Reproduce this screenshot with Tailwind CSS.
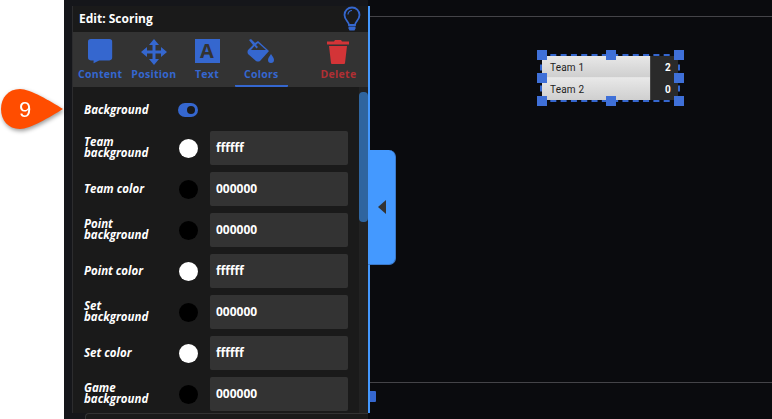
<!DOCTYPE html>
<html lang="en">
<head>
    <meta charset="UTF-8">
    <title>Edit: Scoring</title>
    <script src="https://cdn.jsdelivr.net/npm/@tailwindcss/browser@4"></script>
</head>
<body class="bg-white font-['Open_Sans',sans-serif]">
<div class="relative flex w-[772px] h-[419px] overflow-hidden bg-white">
    <div class="w-[64px] shrink-0 bg-white"></div>

    <!-- Sidebar -->
    <div class="flex flex-col w-[304px] shrink-0 bg-[#15161a]">
        <div class="flex flex-1 min-h-0 pt-[6px]">
            <div class="w-[9px] shrink-0 border-r border-[#2c2c2e]"></div>
            <div class="flex flex-col flex-1 min-w-0">
                <div class="flex items-center justify-between h-[26px] pl-[6px] pr-[6px] bg-[#1a1a1a]">
                    <span class="text-[12px] font-bold text-white">Edit: Scoring</span>
                    <svg class="w-[20px] h-[26px]" viewBox="0 0 20 26" fill="none">
                        <path d="M7 19c0-3-4.500-5-4.500-10a7.500 7.500 0 0 1 15 0c0 5-4.500 7-4.500 10z" stroke="#3567cf" stroke-width="1.800"/>
                        <path d="M6 8.500a4 4 0 0 1 4-4" stroke="#3567cf" stroke-width="1.200"/>
                        <path d="M6.500 20.500h7v2l-1 2h-5l-1-2z" fill="#3567cf"/>
                    </svg>
                </div>

                <div class="flex h-[55px] bg-[#333333] text-[10.500px] font-bold tracking-[0.3px] text-[#3567cf]">
                    <div class="flex flex-col items-center w-[55px] pt-[7px]">
                        <svg class="w-[26px] h-[26px]" viewBox="0 0 26 26"><path d="M3 0h20a3 3 0 0 1 3 3v17a3 3 0 0 1-3 3H12l-6 3v-3H3a3 3 0 0 1-3-3V3a3 3 0 0 1 3-3z" fill="#3567cf" transform="translate(1 0) scale(.93)"/></svg>
                        <span class="leading-[14px] mt-[2px]">Content</span>
                    </div>
                    <div class="flex flex-col items-center w-[54px] pt-[7px]">
                        <svg class="w-[26px] h-[26px]" viewBox="0 0 26 26" fill="#3567cf"><path d="M13 0l5 6h-3.500v5.500H20V8l6 5-6 5v-3.500h-5.500V20H18l-5 6-5-6h3.500v-5.500H6V18l-6-5 6-5v3.500h5.500V6H8z"/></svg>
                        <span class="leading-[14px] mt-[2px]">Position</span>
                    </div>
                    <div class="flex flex-col items-center w-[54px] pt-[7px]">
                        <div class="flex items-center justify-center w-[25px] h-[24px] mb-[2px] bg-[#3567cf] text-[20px] leading-none text-[#333333]">A</div>
                        <span class="leading-[14px] mt-[2px]">Text</span>
                    </div>
                    <div class="flex flex-col items-center w-[54px] ml-[1px] pt-[7px] rounded-b-[1px] border-b-[2px] border-[#3567cf]">
                        <svg class="w-[28px] h-[26px]" viewBox="0 0 28 26" fill="#3567cf"><path d="M2 1l2-1 4 4 3-2 11 10-9 10q-2 1-4 0L1 15q-1-2 0-4l5-5zM7.500 7L4 11h15l-8-7-2 2 2 2-1.500 1.500z"/><path d="M24 15c2 3 3 4 3 6a3 3 0 0 1-6 0c0-2 1-3 3-6z"/></svg>
                        <span class="leading-[14px] mt-[2px]">Colors</span>
                    </div>
                    <div class="flex flex-col items-center w-[60px] ml-[21px] pt-[7px] text-[#b02f33]">
                        <svg class="w-[22px] h-[26px]" viewBox="0 0 22 26"><path d="M0 2.500h7l1-1.500h6l1 1.500h7v3H0zM2 7h18l-2 17q0 1-1 1H5q-1 0-1-1z" fill="#d33437"/></svg>
                        <span class="leading-[14px] mt-[2px]">Delete</span>
                    </div>
                </div>

                <div class="relative flex flex-col flex-1 min-h-0 overflow-hidden bg-[#1a1a1a] pl-[11px]">
                    <div class="flex items-center h-[44px] shrink-0 pt-[2px]">
                        <span class="w-[94px] text-[11.500px] font-bold italic text-white">Background</span>
                        <span class="relative w-[20px] h-[14px] rounded-full bg-[#3567cf]">
                            <span class="absolute right-[3px] top-[3px] w-[8px] h-[8px] rounded-full bg-[#1a1a1a]"></span>
                        </span>
                    </div>
                    <div class="flex flex-col gap-[7px]">
                        <div class="flex items-center h-[34px]">
                            <span class="w-[95px] pb-[2px] text-[11.500px] leading-[11px] font-bold italic text-white">Team<br>background</span>
                            <span class="w-[19px] h-[19px] rounded-full bg-white mr-[12px]"></span>
                            <span class="flex items-center w-[138px] h-[34px] pl-[6px] rounded-[2px] bg-[#333333] text-[12px] font-bold text-white">ffffff</span>
                        </div>
                        <div class="flex items-center h-[34px]">
                            <span class="w-[95px] pb-[2px] text-[11.500px] leading-[11px] font-bold italic text-white">Team color</span>
                            <span class="w-[19px] h-[19px] rounded-full bg-black mr-[12px]"></span>
                            <span class="flex items-center w-[138px] h-[34px] pl-[6px] rounded-[2px] bg-[#333333] text-[12px] font-bold text-white">000000</span>
                        </div>
                        <div class="flex items-center h-[34px]">
                            <span class="w-[95px] pb-[2px] text-[11.500px] leading-[11px] font-bold italic text-white">Point<br>background</span>
                            <span class="w-[19px] h-[19px] rounded-full bg-black mr-[12px]"></span>
                            <span class="flex items-center w-[138px] h-[34px] pl-[6px] rounded-[2px] bg-[#333333] text-[12px] font-bold text-white">000000</span>
                        </div>
                        <div class="flex items-center h-[34px]">
                            <span class="w-[95px] pb-[2px] text-[11.500px] leading-[11px] font-bold italic text-white">Point color</span>
                            <span class="w-[19px] h-[19px] rounded-full bg-white mr-[12px]"></span>
                            <span class="flex items-center w-[138px] h-[34px] pl-[6px] rounded-[2px] bg-[#333333] text-[12px] font-bold text-white">ffffff</span>
                        </div>
                        <div class="flex items-center h-[34px]">
                            <span class="w-[95px] pb-[2px] text-[11.500px] leading-[11px] font-bold italic text-white">Set<br>background</span>
                            <span class="w-[19px] h-[19px] rounded-full bg-black mr-[12px]"></span>
                            <span class="flex items-center w-[138px] h-[34px] pl-[6px] rounded-[2px] bg-[#333333] text-[12px] font-bold text-white">000000</span>
                        </div>
                        <div class="flex items-center h-[34px]">
                            <span class="w-[95px] pb-[2px] text-[11.500px] leading-[11px] font-bold italic text-white">Set color</span>
                            <span class="w-[19px] h-[19px] rounded-full bg-white mr-[12px]"></span>
                            <span class="flex items-center w-[138px] h-[34px] pl-[6px] rounded-[2px] bg-[#333333] text-[12px] font-bold text-white">ffffff</span>
                        </div>
                        <div class="flex items-center h-[34px]">
                            <span class="w-[95px] pb-[2px] text-[11.500px] leading-[11px] font-bold italic text-white">Game<br>background</span>
                            <span class="w-[19px] h-[19px] rounded-full bg-black mr-[12px]"></span>
                            <span class="flex items-center w-[138px] h-[34px] pl-[6px] rounded-[2px] bg-[#333333] text-[12px] font-bold text-white">000000</span>
                        </div>
                    </div>
                    <!-- Scrollbar -->
                    <div class="absolute right-0 top-0 bottom-0 w-[9px] bg-[#222222]">
                        <div class="mt-[5px] h-[130px] rounded-[4px] bg-[#2f659f]"></div>
                    </div>
                </div>
            </div>
        </div>
        <div class="h-[6px] shrink-0 pl-[21px] bg-[#15161a]">
            <div class="h-full rounded-tl-[4px] border-t border-l border-[#333333] bg-[#1a1a1a]"></div>
        </div>
    </div>

    <!-- Canvas -->
    <div class="relative flex-1 bg-[#0a0b0e]">
        <div class="absolute left-0 top-[6px] bottom-[6px] w-[2px] bg-[#4499ff]"></div>
        <div class="absolute left-[2px] right-0 top-[16px] h-px bg-[#444448]"></div>
        <div class="absolute left-[2px] right-0 top-[382px] h-px bg-[#444448]"></div>
        <div class="absolute left-[2px] top-[391px] w-[6px] h-[11px] rounded-r-[1px] bg-[#3567cf]"></div>

        <!-- Panel toggle -->
        <div class="absolute left-0 top-[150px] flex items-center justify-center w-[28px] h-[115px] rounded-r-[7px] bg-[#4499ff] border-r border-b border-[#3a78c8]">
            <span class="w-0 h-0 border-y-[7px] border-y-transparent border-r-[8px] border-r-[#333333]"></span>
        </div>

        <!-- Scoreboard -->
        <div class="absolute left-[172px] top-[54px] w-[140px] h-[48px] border-2 border-dashed border-[#3567cf]">
            <div class="flex h-[22px] text-[10px] tracking-[0.2px] font-['Roboto',sans-serif]">
                <div class="flex items-center flex-1 pl-[8px] pt-[1px] border-b border-[#e4e4e4] bg-gradient-to-b from-[#e8e8e8] to-[#cfcfcf] text-[#222]">Team 1</div>
                <div class="flex items-center justify-end w-[28px] pr-[7px] pt-[1px] border-l border-[#444] bg-[#2a2a2a] text-white font-bold">2</div>
            </div>
            <div class="flex h-[22px] text-[10px] tracking-[0.2px] font-['Roboto',sans-serif]">
                <div class="flex items-center flex-1 pl-[8px] pt-[1px] bg-gradient-to-b from-[#e8e8e8] to-[#cfcfcf] text-[#222]">Team 2</div>
                <div class="flex items-center justify-end w-[28px] pr-[7px] pt-[1px] border-l border-[#444] bg-[#2a2a2a] text-white font-bold">0</div>
            </div>
            <span class="absolute left-[-5px] top-[-6px] w-[10px] h-[10px] bg-[#3f70d8]"></span>
            <span class="absolute left-[64px] top-[-6px] w-[10px] h-[10px] bg-[#3f70d8]"></span>
            <span class="absolute right-[-6px] top-[-6px] w-[10px] h-[10px] bg-[#3f70d8]"></span>
            <span class="absolute left-[-5px] top-[17px] w-[10px] h-[10px] bg-[#3f70d8]"></span>
            <span class="absolute right-[-6px] top-[17px] w-[10px] h-[10px] bg-[#3f70d8]"></span>
            <span class="absolute left-[-5px] bottom-[-6px] w-[10px] h-[10px] bg-[#3f70d8]"></span>
            <span class="absolute left-[64px] bottom-[-6px] w-[10px] h-[10px] bg-[#3f70d8]"></span>
            <span class="absolute right-[-6px] bottom-[-6px] w-[10px] h-[10px] bg-[#3f70d8]"></span>
        </div>
    </div>

    <!-- Step callout -->
    <div class="absolute left-0 top-[89px] flex items-center w-[64px] h-[40px] drop-shadow-[1px_2px_2px_rgba(0,0,0,0.4)]">
        <svg class="absolute inset-0" width="64" height="40" viewBox="0 0 64 40"><path d="M20 0C30 0 50 12 63 20 50 28 30 40 20 40 8 40 1 31 1 20S8 0 20 0z" fill="#ff4d00"/></svg>
        <span class="relative ml-[19px] font-['Liberation_Sans',sans-serif] text-[22px] text-white">9</span>
    </div>
</div>
</body>
</html>
